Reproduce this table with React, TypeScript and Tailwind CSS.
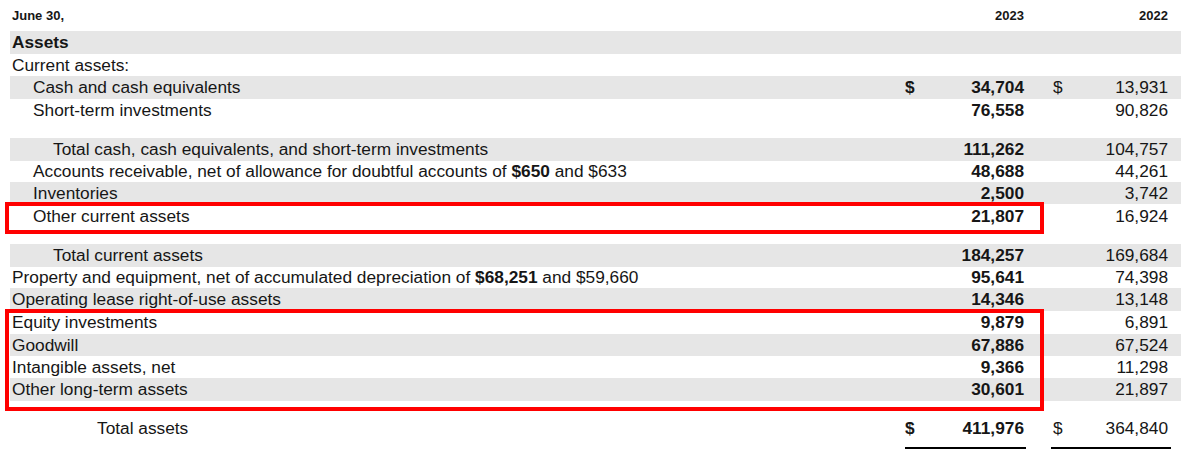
import type { ReactNode } from "react";

type Row = {
  label: ReactNode;
  indent?: 0 | 1 | 2 | 3;
  shade?: boolean;
  bold?: boolean;
  cur?: boolean;
  a?: string;
  b?: string;
  h: string;
  gap?: string;
};

const indentClass = ["pl-[2px]", "pl-[23px]", "pl-[43px]", "pl-[87px]"];

const rows: Row[] = [
  { label: "Assets", bold: true, shade: true, h: "h-[23px]" },
  { label: "Current assets:", h: "h-[22px]" },
  { label: "Cash and cash equivalents", indent: 1, shade: true, cur: true, a: "34,704", b: "13,931", h: "h-[23px]" },
  { label: "Short-term investments", indent: 1, a: "76,558", b: "90,826", h: "h-[22px]" },
  { label: "Total cash, cash equivalents, and short-term investments", indent: 2, shade: true, a: "111,262", b: "104,757", h: "h-[23px]", gap: "mt-[17px]" },
  {
    label: (
      <>
        Accounts receivable, net of allowance for doubtful accounts of <b>$650</b> and $633
      </>
    ),
    indent: 1,
    a: "48,688",
    b: "44,261",
    h: "h-[21px]",
  },
  { label: "Inventories", indent: 1, shade: true, a: "2,500", b: "3,742", h: "h-[22px]" },
  { label: "Other current assets", indent: 1, a: "21,807", b: "16,924", h: "h-[24px]" },
  { label: "Total current assets", indent: 2, shade: true, a: "184,257", b: "169,684", h: "h-[23px]", gap: "mt-[16px]" },
  {
    label: (
      <>
        Property and equipment, net of accumulated depreciation of <b>$68,251</b> and $59,660
      </>
    ),
    a: "95,641",
    b: "74,398",
    h: "h-[21px]",
  },
  { label: "Operating lease right-of-use assets", shade: true, a: "14,346", b: "13,148", h: "h-[23px]" },
  { label: "Equity investments", a: "9,879", b: "6,891", h: "h-[23px]" },
  { label: "Goodwill", shade: true, a: "67,886", b: "67,524", h: "h-[22px]" },
  { label: "Intangible assets, net", a: "9,366", b: "11,298", h: "h-[22px]" },
  { label: "Other long-term assets", shade: true, a: "30,601", b: "21,897", h: "h-[23px]" },
  { label: "Total assets", indent: 3, cur: true, a: "411,976", b: "364,840", h: "h-[23px]", gap: "mt-[16px]" },
];

function LineRow({ row }: { row: Row }) {
  return (
    <div
      className={`flex items-center leading-[23px] ${row.h} ${row.gap ?? ""} ${row.shade ? "bg-[#e6e6e6]" : ""}`}
    >
      <div className={`flex-1 whitespace-nowrap ${indentClass[row.indent ?? 0]} ${row.bold ? "font-bold" : ""}`}>
        {row.label}
      </div>
      <div className="flex w-[119px] justify-between font-bold">
        <span>{row.cur ? "$" : ""}</span>
        <span>{row.a}</span>
      </div>
      <div className="w-[29px]" />
      <div className="flex w-[115px] justify-between">
        <span>{row.cur ? "$" : ""}</span>
        <span>{row.b}</span>
      </div>
      <div className="w-[13px]" />
    </div>
  );
}

export default function App() {
  return (
    <div
      className="relative h-[455px] w-[1183px] overflow-hidden bg-white text-[17.3px] text-[#161616]"
      style={{ fontFamily: '"Liberation Sans", Arial, sans-serif' }}
    >
      <div className="ml-[10px] w-[1171px]">
        <div className="flex h-[31px] items-center text-[13px] font-bold">
          <div className="flex-1 pl-[2px]">June 30,</div>
          <div className="w-[119px] text-right">2023</div>
          <div className="w-[29px]" />
          <div className="w-[115px] text-right">2022</div>
          <div className="w-[13px]" />
        </div>

        {rows.map((row, i) => (
          <LineRow key={i} row={row} />
        ))}

        <div className="mt-[7px] flex">
          <div className="flex-1" />
          <div className="-ml-[1px] h-[2px] w-[121px] bg-black" />
          <div className="w-[25px]" />
          <div className="h-[2px] w-[120px] bg-black" />
          <div className="w-[10px]" />
        </div>
      </div>

      {/* annotation boxes */}
      <div className="absolute left-[5px] top-[202px] h-[32px] w-[1039px] border-[4px] border-[#ff0000]" />
      <div className="absolute left-[5px] top-[309px] h-[102px] w-[1039px] border-[4px] border-[#ff0000]" />
    </div>
  );
}
